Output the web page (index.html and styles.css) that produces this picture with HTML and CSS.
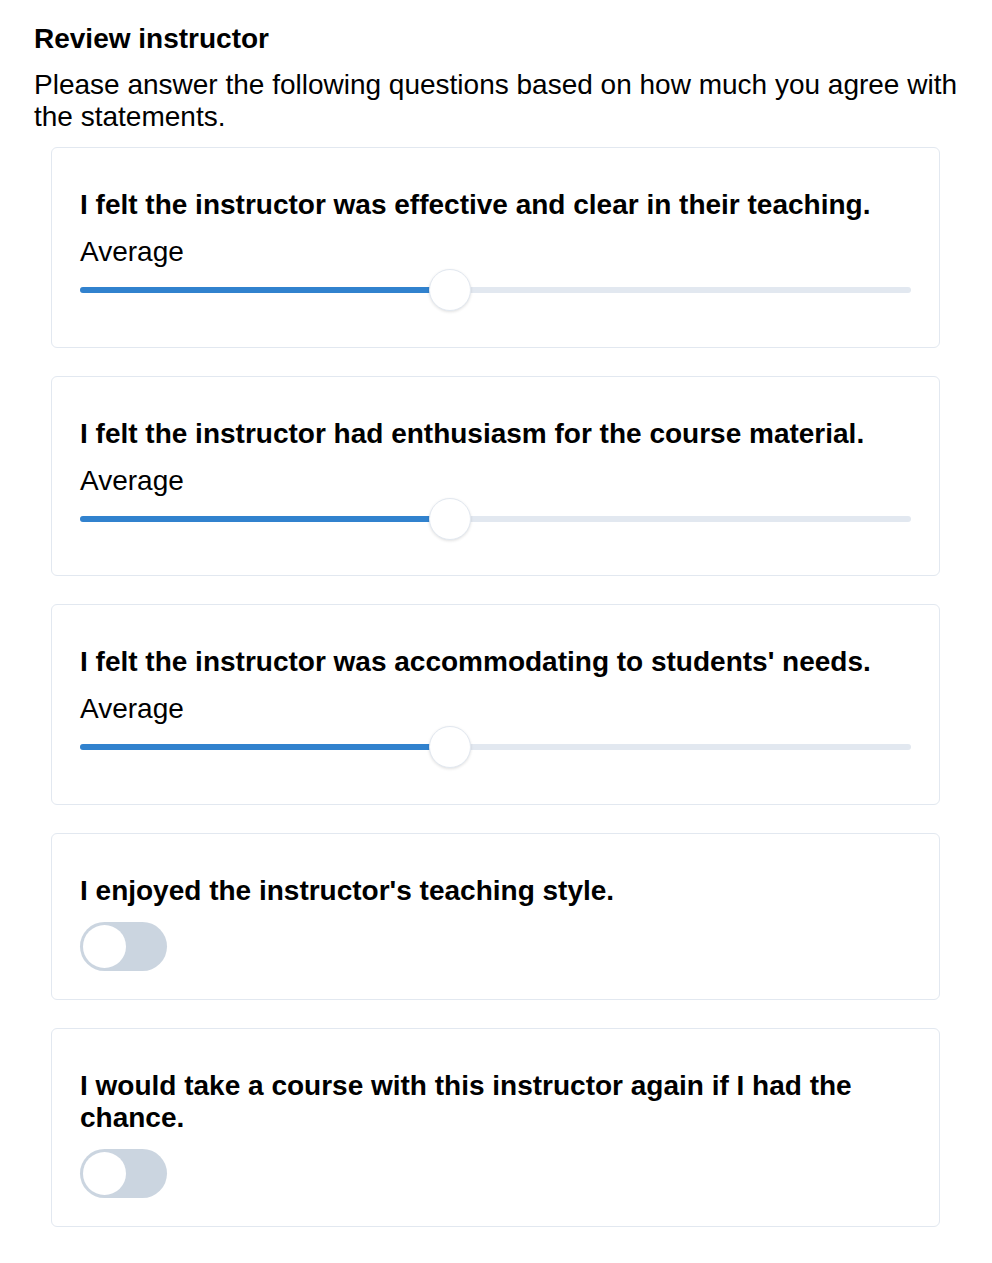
FILE: index.html
```html
<!DOCTYPE html>
<html>
<head>
<meta charset="utf-8">
<link rel="stylesheet" href="styles.css">
</head>
<body>
<div class="page">
  <h1 class="title">Review instructor</h1>
  <p class="intro">Please answer the following questions based on how much you agree with the statements.</p>
  <div class="cards">
    <div class="card">
      <div class="question">I felt the instructor was effective and clear in their teaching.</div>
      <div class="value">Average</div>
      <div class="slider">
        <div class="track"><div class="fill" style="width:370px"></div></div>
        <div class="thumb" style="left:349px"></div>
      </div>
    </div>
    <div class="card">
      <div class="question">I felt the instructor had enthusiasm for the course material.</div>
      <div class="value">Average</div>
      <div class="slider">
        <div class="track"><div class="fill" style="width:370px"></div></div>
        <div class="thumb" style="left:349px"></div>
      </div>
    </div>
    <div class="card">
      <div class="question">I felt the instructor was accommodating to students' needs.</div>
      <div class="value">Average</div>
      <div class="slider">
        <div class="track"><div class="fill" style="width:370px"></div></div>
        <div class="thumb" style="left:349px"></div>
      </div>
    </div>
    <div class="card card-toggle">
      <div class="question">I enjoyed the instructor's teaching style.</div>
      <div class="toggle"><div class="knob"></div></div>
    </div>
    <div class="card card-toggle">
      <div class="question">I would take a course with this instructor again if I had the chance.</div>
      <div class="toggle"><div class="knob"></div></div>
    </div>
  </div>
</div>
</body>
</html>
```
FILE: styles.css
```css
html, body {
  margin: 0;
  padding: 0;
  background: #ffffff;
}
body {
  font-family: "Liberation Sans", Arial, sans-serif;
  color: #000000;
}
.page {
  padding: 24px 34px 30px 34px;
}
.title {
  margin: 0;
  font-size: 28px;
  line-height: 30px;
  font-weight: 700;
}
.intro {
  margin: 15px 0 0 0;
  font-size: 28px;
  line-height: 32px;
  font-weight: 400;
}
.cards {
  margin: 14px 18px 0 17px;
  display: flex;
  flex-direction: column;
  gap: 28px;
}
.card {
  border: 1px solid #e2e8f0;
  border-radius: 6px;
  padding: 41px 28px 28px 28px;
}
.question {
  font-size: 28px;
  line-height: 32px;
  font-weight: 700;
}
.value {
  margin-top: 15px;
  font-size: 28px;
  line-height: 32px;
}
.slider {
  position: relative;
  height: 42px;
  margin: 1px 0 7.5px 0;
  display: flex;
  align-items: center;
}
.track {
  flex: 1;
  height: 6px;
  border-radius: 3px;
  background: #e2e8f0;
  overflow: hidden;
}
.fill {
  height: 100%;
  background: #3182ce;
}
.thumb {
  position: absolute;
  top: 0;
  width: 40px;
  height: 40px;
  border-radius: 50%;
  background: #fff;
  border: 1px solid #e2e8f0;
  box-shadow: 0 1px 3px rgba(0,0,0,0.12);
}
.toggle {
  margin-top: 15px;
  width: 87px;
  height: 49px;
  border-radius: 25px;
  background: #cbd5e0;
  padding: 3px;
  box-sizing: border-box;
}
.knob {
  width: 43px;
  height: 43px;
  border-radius: 50%;
  background: #ffffff;
}
```
